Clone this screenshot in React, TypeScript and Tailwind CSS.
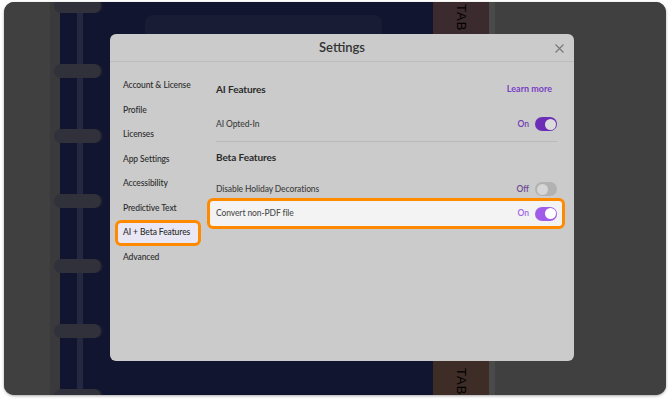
import React from "react";

function Toggle({ on, track, knob }: { on: boolean; track: string; knob: string }) {
  return (
    <div className={`w-[22px] h-[14px] rounded-full flex items-center px-[1.5px] ${track} ${on ? "justify-end" : "justify-start"}`}>
      <div className={`w-[11px] h-[11px] rounded-full ${knob}`} />
    </div>
  );
}

const items = [
  "Account & License",
  "Profile",
  "Licenses",
  "App Settings",
  "Accessibility",
  "Predictive Text",
  "AI + Beta Features",
  "Advanced",
];

export default function App() {
  const ringTops = [-3, 62, 127, 192, 257, 322, 387];
  return (
    <div className="w-[670px] h-[401px] bg-white pt-[2px] pl-[4px] font-['Lato',sans-serif]">
      <div className="relative w-[662px] h-[393px] rounded-[10px] overflow-hidden bg-[#404040] shadow-[0_1px_3px_rgba(0,0,0,0.35)] flex">
        <div className="w-[46px] h-full bg-[#404040]" />
        <div className="w-[10px] h-full bg-[#3a3a3c]" />
        <div className="w-[373px] h-full bg-[#12152f] flex">
          <div className="ml-[17px] w-[6px] h-full bg-[#252940]" />
          <div className="ml-[62px] mt-[13px] w-[237px] h-[120px] rounded-[8px] bg-[#191c35]" />
        </div>
        <div className="w-[56px] h-full flex flex-col">
          <div className="h-[200px] bg-[#3b2a2e] flex justify-center pt-[2px]">
            <span className="[writing-mode:vertical-rl] text-[13px] tracking-[1px] text-black font-['Liberation_Sans',sans-serif] leading-none">TAB 1</span>
          </div>
          <div className="flex-1 bg-[#3e2c27] flex justify-center items-end">
            <span className="[writing-mode:vertical-rl] text-[13px] tracking-[1px] text-black font-['Liberation_Sans',sans-serif] leading-none mb-[-13px]">TAB 5</span>
          </div>
        </div>
        <div className="w-[6px] h-full bg-[#4a4a4a]" />
        <div className="flex-1 h-full bg-[#404040]" />

        {/* binding rings */}
        {ringTops.map((t) => (
          <div
            key={t}
            className="absolute left-[50px] w-[47px] h-[14px] rounded-full bg-[#30313a] shadow-[2px_0_0_#1c1e30]"
            style={{ top: t }}
          />
        ))}

        {/* modal */}
        <div className="absolute left-[106px] top-[32px] w-[464px] h-[327px] rounded-[6px] bg-[#cbcbcb] flex flex-col">
          <div className="relative h-[28px] border-b border-[#bdbdbd] flex items-center justify-center">
            <span className="text-[13px] font-semibold text-[#333] mt-[1px]">Settings</span>
            <svg className="absolute right-[10px] top-[10px]" width="9" height="9" viewBox="0 0 9 9">
              <path d="M0.5 0.5 L8.5 8.5 M8.5 0.5 L0.5 8.5" stroke="#777" strokeWidth="1.1" />
            </svg>
          </div>
          <div className="flex flex-1">
            <div className="w-[92px] pl-[5px] pt-[11px] flex flex-col">
              {items.map((it) =>
                it === "AI + Beta Features" ? (
                  <div key={it} className="h-[25.6px] -my-[0.5px] w-[86px] rounded-[6px] border-[3px] border-[#ff8a00] bg-[#e9e7f3] pl-[5px] flex items-center whitespace-nowrap text-[8.5px] font-medium tracking-[-0.1px] text-[#2b2b2b]">
                    {it}
                  </div>
                ) : (
                  <div key={it} className="h-[24.6px] pl-[8px] flex items-center whitespace-nowrap text-[8.5px] font-medium tracking-[-0.1px] text-[#2b2b2b]">
                    {it}
                  </div>
                )
              )}
            </div>
            <div className="ml-[14px] w-[341px] pt-[17px] flex flex-col">
              <div className="h-[20px] flex items-center justify-between">
                <span className="text-[10px] font-bold text-[#2a2a2a] tracking-[-0.1px]">AI Features</span>
                <span className="text-[9px] font-bold text-[#7a3fc4] mr-[5px]">Learn more</span>
              </div>
              <div className="mt-[10px] h-[30px] flex items-center justify-between">
                <span className="text-[8.5px] font-medium text-[#3d3d3d] tracking-[-0.1px]">AI Opted-In</span>
                <div className="flex items-center gap-[6px]">
                  <span className="text-[8.5px] font-semibold text-[#6f3bb5]">On</span>
                  <Toggle on track="bg-[#6c2eb6]" knob="bg-[#dcdcdc]" />
                </div>
              </div>
              <div className="mt-[2px] h-px bg-[#b9b9b9]" />
              <div className="mt-[5px] h-[20px] flex items-center">
                <span className="text-[10px] font-bold text-[#2a2a2a] tracking-[-0.1px]">Beta Features</span>
              </div>
              <div className="mt-[12px] h-[20px] flex items-center justify-between">
                <span className="text-[8.5px] font-medium text-[#3d3d3d] tracking-[-0.1px]">Disable Holiday Decorations</span>
                <div className="flex items-center gap-[6px]">
                  <span className="text-[8.5px] font-semibold text-[#6d4a93]">Off</span>
                  <Toggle on={false} track="bg-[#b2b2b2]" knob="bg-[#d6d6d6]" />
                </div>
              </div>
              <div className="-mt-[1px] -ml-[9px] -mr-[8px] h-[31px] rounded-[6px] border-[3px] border-[#ff8a00] bg-[#f3f3f3] pl-[6px] pr-[5px] flex items-center justify-between">
                <span className="text-[8.5px] font-medium text-[#4d4d4d] tracking-[-0.1px]">Convert non-PDF file</span>
                <div className="flex items-center gap-[6px]">
                  <span className="text-[8.5px] font-semibold text-[#a066e6]">On</span>
                  <Toggle on track="bg-[#a05ce8]" knob="bg-white" />
                </div>
              </div>
            </div>
          </div>
        </div>
      </div>
    </div>
  );
}
